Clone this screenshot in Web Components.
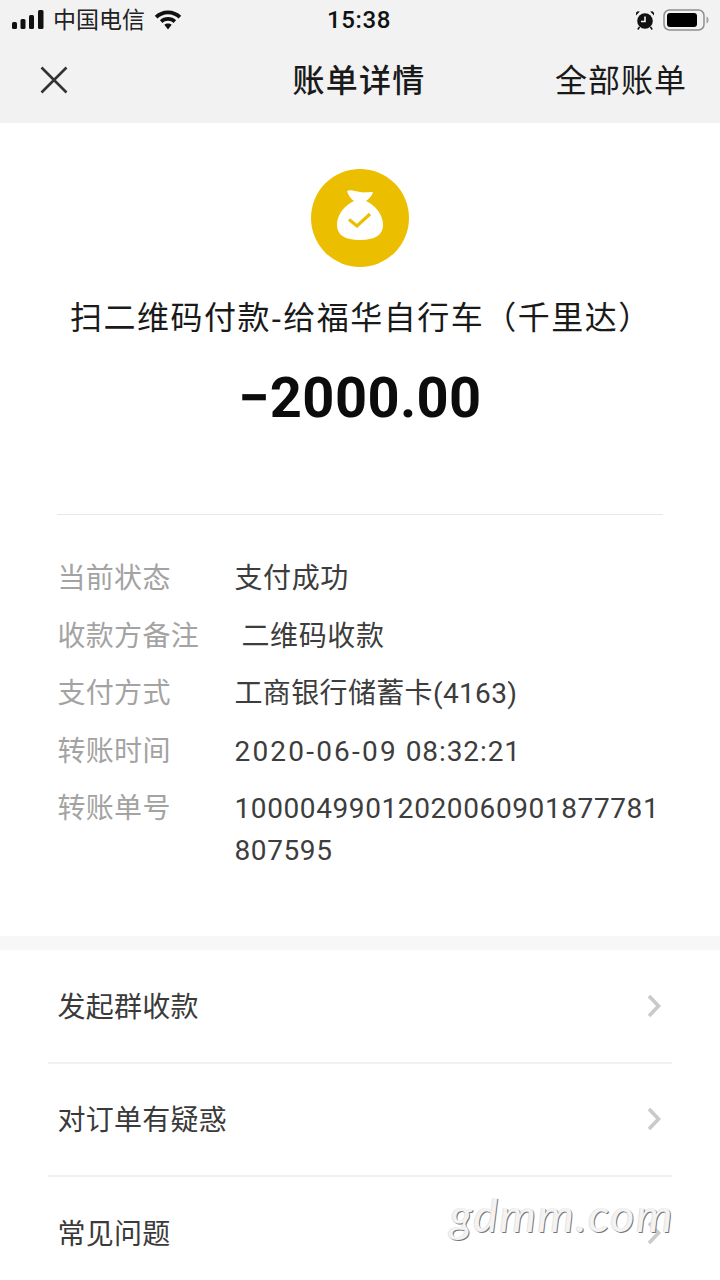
<!DOCTYPE html>
<html lang="zh">
<head>
<meta charset="utf-8">
<title>账单详情</title>
<style>
  html, body { margin: 0; padding: 0; background: #fff; }
  body {
    width: 720px; height: 1280px; overflow: hidden; position: relative;
    font-family: "Liberation Sans", "Noto Sans CJK SC", sans-serif;
  }
</style>
</head>
<body>
<status-bar></status-bar>
<nav-bar></nav-bar>
<bill-head amount="−2000.00">扫二维码付款-给福华自行车（千里达）</bill-head>
<bill-info>
  <info-row label="当前状态">支付成功</info-row>
  <info-row label="收款方备注"><span style="margin-left:7px">二维码收款</span></info-row>
  <info-row label="支付方式"><span style="letter-spacing:.35px">工商银行储蓄卡(4163)</span></info-row>
  <info-row label="转账时间"><span style="letter-spacing:2.2px">2020-06-09</span><span style="letter-spacing:.9px"> 08:32:21</span></info-row>
  <info-row label="转账单号">10000499012020060901877781807595</info-row>
</bill-info>
<link-list>
  <link-row>发起群收款</link-row>
  <link-row>对订单有疑惑</link-row>
  <link-row>常见问题</link-row>
</link-list>
<water-mark>gdmm.com</water-mark>

<script>
class StatusBar extends HTMLElement {
  constructor() {
    super();
    this.attachShadow({ mode: 'open' }).innerHTML = `
      <style>
        :host { display: flex; align-items: center; justify-content: space-between; height: 40px; background: #f2f2f2; color: #111; padding: 0 11px 0 12px; box-sizing: border-box; position: relative; }
        .left, .right { display: flex; align-items: center; }
        .carrier { font-size: 23px; margin: 0 9px 0 9px; color: #222; line-height: 40px; }
        .time { position: absolute; left: 327px; top: 0; font: 500 24px/40px Roboto, sans-serif; letter-spacing: .6px; }
        svg { display: block; }
      </style>
      <div class="left">
        <svg width="32" height="20" viewBox="0 0 32 20" fill="#111">
          <rect x="0" y="12" width="5" height="7" rx="1.5"/>
          <rect x="8.5" y="9" width="5" height="10" rx="1.5"/>
          <rect x="17" y="5" width="5" height="14" rx="1.5"/>
          <rect x="26" y="0" width="5.5" height="19" rx="1.5"/>
        </svg>
        <span class="carrier">中国电信</span>
        <svg width="28" height="20" viewBox="0 0 28 20" fill="#111">
          <path d="M14 0.5C8.8 0.5 4.2 2.5 0.8 5.8L3.4 8.5C6.2 5.8 9.9 4.2 14 4.2s7.8 1.6 10.6 4.3l2.6-2.7C23.8 2.5 19.2 .5 14 .5z"/>
          <path d="M14 7c-3.2 0-6 1.2-8.1 3.2l2.6 2.7C10 11.5 11.9 10.7 14 10.7s4 .8 5.500 2.200l2.600-2.700C20 8.200 17.200 7 14 7z"/>
          <path d="M14 13.400c-1.400 0-2.700.5-3.700 1.400L14 19.500l3.700-4.700c-1-.9-2.300-1.400-3.700-1.400z"/>
        </svg>
      </div>
      <span class="time">15:38</span>
      <div class="right">
        <svg width="20" height="21" viewBox="0 0 20 21" style="margin-right:8px">
          <circle cx="10" cy="11" r="7.800" fill="#111"/>
          <path d="M10 6.500V11.500H6" fill="none" stroke="#f2f2f2" stroke-width="1.600"/>
          <path d="M1 5.500 4.800 1.600 2.600 1.200 1 2.800zM19 5.500 15.200 1.600 17.400 1.200 19 2.800z" fill="#111"/>
          <path d="M4.500 17 2.800 19.500M15.500 17 17.200 19.500" stroke="#111" stroke-width="1.500"/>
        </svg>
        <svg width="46" height="22" viewBox="0 0 46 22">
          <rect x="1" y="1" width="40" height="20" rx="5.500" fill="none" stroke="#8e8e8e" stroke-width="1.500"/>
          <rect x="4" y="4" width="30" height="14" rx="3" fill="#000"/>
          <path d="M43.500 7.500c1.300.4 2 1.800 2 3.500s-.7 3.100-2 3.500z" fill="#a0a0a0"/>
        </svg>
      </div>`;
  }
}

class NavBar extends HTMLElement {
  constructor() {
    super();
    this.attachShadow({ mode: 'open' }).innerHTML = `
      <style>
        :host { display: flex; align-items: center; justify-content: space-between; height: 83px; background: #f2f2f2; color: #1a1a1a; padding: 0 33px 4px 40px; box-sizing: border-box; position: relative; }
        svg { display: block; }
        .title { position: absolute; left: -2px; right: 0; top: 0; height: 83px; line-height: 83px; text-align: center; font-size: 32px; font-weight: 500; letter-spacing: 1.300px; pointer-events: none; }
        .all { font-size: 32px; letter-spacing: 1px; line-height: 83px; margin-bottom: -4px; }
      </style>
      <svg width="28" height="28" viewBox="0 0 28 28"><path d="M1.500 1.500 26.500 26.500M26.500 1.500 1.500 26.500" stroke="#333" stroke-width="2.600" fill="none"/></svg>
      <div class="title">账单详情</div>
      <div class="all">全部账单</div>`;
  }
}

class BillHead extends HTMLElement {
  static get observedAttributes() { return ['amount']; }
  constructor() {
    super();
    this.attachShadow({ mode: 'open' }).innerHTML = `
      <style>
        :host { display: flex; flex-direction: column; align-items: center; color: #111; height: 391px; box-sizing: border-box; padding-top: 45px; }
        .icon { display: block; width: 100px; height: 100px; }
        .name { align-self: flex-start; margin: 28px 0 0 70px; font-size: 32px; line-height: 44px; letter-spacing: 1.500px; white-space: nowrap; color: #1a1a1a; }
        .amount { margin-top: 23px; font: 700 56px/70px Roboto, sans-serif; letter-spacing: .4px; color: #0c0c0c; }
      </style>
      <svg class="icon" viewBox="0 0 100 100">
        <circle cx="50" cy="50" r="49" fill="#ebbf00"/>
        <path d="M37 23C40 21 45 23 50 24C54 25 58 24 63 24C62 28 59 31 56 33C65 37 73 46 73 57C73 67 65 72 50 72C35 72 27 67 27 57C27 46 35 37 44 33C41 31 38 27 37 23z" fill="#fff"/>
        <path d="M39 51.500 47 58 60 46" fill="none" stroke="#ebbf00" stroke-width="3.200"/>
      </svg>
      <div class="name"><slot></slot></div>
      <div class="amount"></div>`;
  }
  attributeChangedCallback() {
    this.shadowRoot.querySelector('.amount').textContent = this.getAttribute('amount');
  }
}

class BillInfo extends HTMLElement {
  constructor() {
    super();
    this.attachShadow({ mode: 'open' }).innerHTML = `
      <style>
        :host { display: block; height: 422px; box-sizing: border-box; margin: 0 57px; border-top: 1px solid #e8e8e8; padding-top: 43px; }
        .rows { display: flex; flex-direction: column; gap: 0; }
      </style>
      <div class="rows"><slot></slot></div>`;
  }
}

class InfoRow extends HTMLElement {
  constructor() {
    super();
    this.attachShadow({ mode: 'open' }).innerHTML = `
      <style>
        :host { display: grid; grid-template-columns: 177.500px 430px; margin-bottom: 15.500px; font-size: 28px; line-height: 42px; }
        .label { color: #a3a3a3; white-space: nowrap; padding-left: .5px; letter-spacing: .3px; }
        .value { color: #3d3d3d; word-break: break-all; font-family: Roboto, "Noto Sans CJK SC", sans-serif; letter-spacing: .6px; }
      </style>
      <div class="label"></div>
      <div class="value"><slot></slot></div>`;
    this.shadowRoot.querySelector('.label').textContent = this.getAttribute('label');
  }
}

class LinkList extends HTMLElement {
  constructor() {
    super();
    this.attachShadow({ mode: 'open' }).innerHTML = `
      <style>
        :host { display: block; border-top: 14px solid #f7f7f7; padding: 1px 48px 0; }
      </style>
      <slot></slot>`;
  }
}

class LinkRow extends HTMLElement {
  constructor() {
    super();
    this.attachShadow({ mode: 'open' }).innerHTML = `
      <style>
        :host { display: flex; align-items: center; justify-content: space-between; height: 113px; box-sizing: border-box; border-bottom: 2px solid #f1f1f1; padding: 0 10px 0 9.500px; font-size: 28px; color: #3a3a3a; letter-spacing: .25px; }
        :host(:last-child) { border-bottom: 0; }
        span { margin-top: -3px; }
        svg { display: block; margin-top: -1px; }
      </style>
      <span><slot></slot></span>
      <svg width="16" height="24" viewBox="0 0 16 24"><path d="M3 2 12.500 12 3 22" fill="none" stroke="#c9c9ce" stroke-width="3.600"/></svg>`;
  }
}

class WaterMark extends HTMLElement {
  constructor() {
    super();
    this.attachShadow({ mode: 'open' }).innerHTML = `
      <style>
        :host { position: absolute; left: 450px; top: 1189px; font: italic 46px/52px Lato, "Open Sans", sans-serif; letter-spacing: 1.800px; color: #f3f3f3; text-shadow: 1px 1px 0 #777, -1px 0 0 #e4e4e4; }
      </style>
      <slot></slot>`;
  }
}

customElements.define('status-bar', StatusBar);
customElements.define('nav-bar', NavBar);
customElements.define('bill-head', BillHead);
customElements.define('bill-info', BillInfo);
customElements.define('info-row', InfoRow);
customElements.define('link-list', LinkList);
customElements.define('link-row', LinkRow);
customElements.define('water-mark', WaterMark);
</script>
</body>
</html>
